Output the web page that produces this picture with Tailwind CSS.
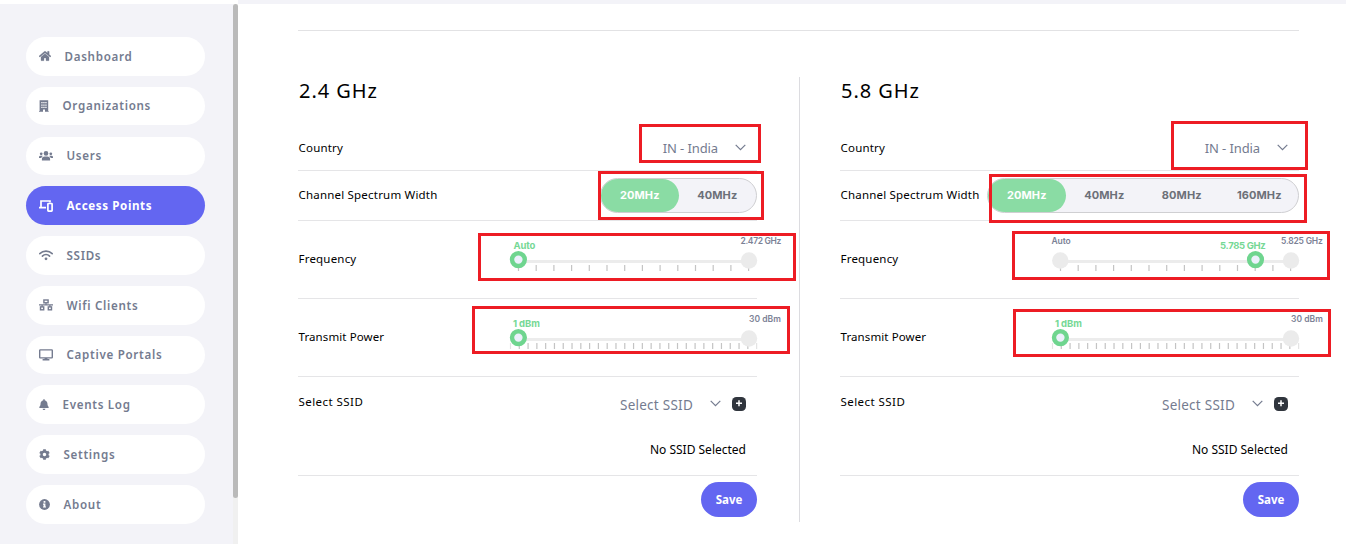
<!DOCTYPE html>
<html lang="en">
<head>
<meta charset="utf-8">
<title>Access Points</title>
<script src="https://cdn.jsdelivr.net/npm/@tailwindcss/browser@4"></script>
</head>
<body class="relative flex h-[544px] overflow-hidden bg-white font-['Noto_Sans',sans-serif] text-black">

<aside class="mt-1 flex w-[238px] shrink-0 justify-between bg-[#f3f3f8]">
  <nav id="nav" class="ml-[26px] mt-[33px] flex w-[179px] flex-col gap-[11.2px]"></nav>
  <div class="w-[5px] bg-[#f0f0f0]"><div class="h-[494px] rounded-full bg-[#bababa]"></div></div>
</aside>

<main class="flex-1 border-t-4 border-[#f3f3f8] pl-[60px] pt-[26px]">
  <hr class="w-[1001px] border-t border-[#e2e2e4]">
  <div class="flex pt-[40px]">
    <section id="band24" class="w-[459px]"></section>
    <div class="ml-[42px] mr-[40px] mt-[6px] h-[445px] w-px bg-[#dcdce0]"></div>
    <section id="band58" class="w-[459px]"></section>
  </div>
</main>

<!-- highlight frames -->
<div class="absolute left-[639px] top-[124px] h-[39px] w-[122px] border-3 border-[#ed1c24]"></div>
<div class="absolute left-[598px] top-[171px] h-[49px] w-[166px] border-3 border-[#ed1c24]"></div>
<div class="absolute left-[478px] top-[233px] h-[48px] w-[318px] border-3 border-[#ed1c24]"></div>
<div class="absolute left-[472px] top-[306px] h-[48px] w-[318px] border-3 border-[#ed1c24]"></div>
<div class="absolute left-[1171px] top-[121px] h-[49px] w-[137px] border-3 border-[#ed1c24]"></div>
<div class="absolute left-[989px] top-[174px] h-[49px] w-[318px] border-3 border-[#ed1c24]"></div>
<div class="absolute left-[1012px] top-[231px] h-[49px] w-[318px] border-3 border-[#ed1c24]"></div>
<div class="absolute left-[1013px] top-[309px] h-[48px] w-[318px] border-3 border-[#ed1c24]"></div>

<script>
const icons = {
  home: [12, 12, '0 0 576 512', '<path fill="currentColor" stroke="currentColor" stroke-width="14" d="M280.37 148.26L96 300.11V464a16 16 0 0 0 16 16l112.06-.29a16 16 0 0 0 15.92-16V368a16 16 0 0 1 16-16h64a16 16 0 0 1 16 16v95.64a16 16 0 0 0 16 16.05L464 480a16 16 0 0 0 16-16V300L295.67 148.26a12.19 12.19 0 0 0-15.3 0zM571.6 251.47L488 182.56V44.05a12 12 0 0 0-12-12h-56a12 12 0 0 0-12 12v72.61L318.47 43a48 48 0 0 0-61 0L4.34 251.47a12 12 0 0 0-1.6 16.9l25.5 31A12 12 0 0 0 45.15 301l235.22-193.74a12.19 12.19 0 0 1 15.3 0L530.9 301a12 12 0 0 0 16.9-1.6l25.5-31a12 12 0 0 0-1.7-16.93z"/>'],
  building: [10, 12, '0 0 10 12', '<path fill="currentColor" fill-rule="evenodd" d="M.6.3h8.6v10.8h.5v.7H6V9.6H4v2.2H0v-.7h.6zM2.3 2v1.3h1.3V2zm2 0v1.3h1.3V2zm2 0v1.3h1.3V2zm-4 2.4v1.3h1.3V4.4zm2 0v1.3h1.3V4.4zm2 0v1.3h1.3V4.4zm-4 2.4v1.3h1.3V6.8zm2 0v1.3h1.3V6.8zm2 0v1.3h1.3V6.8z"/>'],
  users: [14, 12, '0 0 14 12', '<g fill="currentColor"><circle cx="7" cy="3.4" r="2.3"/><circle cx="2.2" cy="3.8" r="1.35"/><circle cx="11.8" cy="3.8" r="1.35"/><path d="M2.9 10.6V9.4A2.8 2.8 0 0 1 5.7 6.6h2.6a2.8 2.8 0 0 1 2.8 2.8v1.2zM0 8.1V7.2A1.4 1.4 0 0 1 1.4 5.8h1.8l.7.3A3.6 3.6 0 0 0 2.3 8.1zM14 8.1V7.2a1.4 1.4 0 0 0-1.4-1.4h-1.8l-.7.3a3.6 3.6 0 0 1 1.6 2z"/></g>'],
  devices: [14, 12, '0 0 14 12', '<g fill="none" stroke="currentColor" stroke-width="1.7"><path d="M2 7.4V1h9v1.6M0 7.7h7"/><rect x="8.9" y="3.5" width="4.2" height="7.6" rx=".6"/></g>'],
  wifi: [14, 12, '0 0 14 12', '<g fill="none" stroke="currentColor" stroke-width="1.6" stroke-linecap="round"><path d="M.8 4.6a9 9 0 0 1 12.4 0M3.4 7.1a5.2 5.2 0 0 1 7.2 0"/></g><circle cx="7" cy="9.8" r="1.4" fill="currentColor"/>'],
  network: [14, 12, '0 0 14 12', '<g fill="none" stroke="currentColor" stroke-width="1.4"><rect x="4.9" y="1" width="4.2" height="2.8"/><rect x="1.5" y="7.9" width="3.2" height="2.9"/><rect x="9.3" y="7.9" width="3.2" height="2.9"/><path d="M0 5.9h14M7 3.8v2.1M3.1 5.9v2M10.9 5.9v2" stroke-width="1.1"/></g>'],
  monitor: [14, 12, '0 0 14 12', '<rect x=".7" y=".9" width="12.6" height="8" rx=".6" fill="none" stroke="currentColor" stroke-width="1.4"/><path d="M5.6 9h2.8v1h2v1.5H3.6V10h2z" fill="currentColor"/>'],
  bell: [10, 11, '0 0 448 512', '<path fill="currentColor" d="M224 512c35.32 0 63.97-28.65 63.97-64H160.03c0 35.35 28.65 64 63.97 64zm215.39-149.71c-19.32-20.76-55.47-51.99-55.47-154.29 0-77.7-54.48-139.9-127.94-155.16V32c0-17.67-14.32-32-31.98-32s-31.98 14.33-31.98 32v20.84C118.56 68.1 64.08 130.3 64.08 208c0 102.3-36.15 133.53-55.47 154.29-6 6.45-8.66 14.16-8.61 21.71.11 16.4 12.98 32 32.1 32h383.8c19.12 0 32-15.6 32.1-32 .05-7.55-2.61-15.27-8.61-21.71z"/>'],
  cog: [11, 11, '0 0 512 512', '<path fill="currentColor" d="M487.4 315.7l-42.6-24.6c4.3-23.2 4.3-47 0-70.2l42.6-24.6c4.9-2.8 7.1-8.6 5.5-14-11.1-35.6-30-67.8-54.7-94.6-3.8-4.1-10-5.1-14.8-2.3L380.8 110c-17.9-15.4-38.5-27.3-60.8-35.1V25.8c0-5.6-3.9-10.5-9.4-11.7-36.7-8.2-74.3-7.8-109.2 0-5.5 1.2-9.4 6.1-9.4 11.7V75c-22.2 7.9-42.8 19.8-60.8 35.1L88.7 85.5c-4.9-2.8-11-1.9-14.8 2.3-24.7 26.7-43.6 58.9-54.7 94.6-1.7 5.4.6 11.2 5.5 14L67.3 221c-4.3 23.2-4.3 47 0 70.2l-42.6 24.6c-4.9 2.8-7.1 8.6-5.5 14 11.1 35.6 30 67.8 54.7 94.6 3.8 4.1 10 5.1 14.8 2.3l42.6-24.6c17.9 15.4 38.5 27.3 60.8 35.1v49.2c0 5.6 3.9 10.5 9.4 11.7 36.7 8.2 74.3 7.8 109.2 0 5.5-1.2 9.4-6.1 9.4-11.7v-49.2c22.2-7.9 42.8-19.8 60.8-35.1l42.6 24.6c4.9 2.8 11 1.9 14.8-2.3 24.7-26.7 43.6-58.9 54.7-94.6 1.5-5.5-.7-11.3-5.6-14.1zM256 336c-44.1 0-80-35.9-80-80s35.9-80 80-80 80 35.9 80 80-35.9 80-80 80z"/>'],
  info: [11, 11, '0 0 11 11', '<circle cx="5.5" cy="5.5" r="5.4" fill="currentColor"/><path d="M4.6 2.1h1.8v1.6H4.6zM4 4.6h2.4v2.8H7v1.2H4V7.4h.6V5.8H4z" fill="white"/>'],
};
const nav = [['home', 'Dashboard'], ['building', 'Organizations'], ['users', 'Users'], ['devices', 'Access Points', true], ['wifi', 'SSIDs'], ['network', 'Wifi Clients'], ['monitor', 'Captive Portals'], ['bell', 'Events Log'], ['cog', 'Settings'], ['info', 'About']];
document.getElementById('nav').innerHTML = nav.map(([key, label, active]) => {
  const [w, h, box, body] = icons[key];
  return `<a class="flex h-[38.6px] shrink-0 items-center gap-[13.5px] rounded-full pl-[13px] text-[11.6px] ${active ? 'bg-[#6366f1] font-bold tracking-[0.6px] text-white' : 'bg-white font-semibold tracking-[0.7px] text-[#747b8f]'}"><svg width="${w}" height="${h}" viewBox="${box}">${body}</svg><span>${label}</span></a>`;
}).join('');

function slider({ ticks, dense, value, at, vx, vw, right, rx, rw, left }) {
  let s = '<path d="M6 40.5H243" stroke="#ececec" stroke-width="3"/>';
  for (let i = 0; i < ticks; i++) {
    const x = dense ? .5 + i * 8.79 : 8.5 + i * 17.7;
    const edge = dense && (i === 0 || i === ticks - 1);
    s += `<path d="M${x.toFixed(2)} 44v6" stroke="${edge ? '#e4e4e4' : '#c4c4c4'}" stroke-width="1.2"/>`;
  }
  if (left) s += `<circle cx="8.3" cy="39.5" r="8.2" fill="#ebebeb"/><text x="-.5" y="23" textLength="19.5" font-size="8.5" font-weight="600" fill="#7c8296">${left}</text>`;
  s += `<circle cx="239" cy="39.5" r="8.2" fill="#ebebeb"/>
    <circle cx="${at}" cy="38.6" r="6.4" fill="#ecf0fc" stroke="#6fd58f" stroke-width="4.4"/>
    <text x="${vx}" y="28" textLength="${vw}" font-size="9.5" font-weight="700" fill="#76d895">${value}</text>
    <text x="${rx}" y="23" textLength="${rw}" font-size="8.5" font-weight="600" fill="#7c8296">${right}</text>`;
  return `<svg class="overflow-visible font-['Inter',sans-serif]" width="247" height="77">${s}</svg>`;
}
const chevron = '<svg width="11" height="7" viewBox="0 0 11 7" fill="none" stroke="#747b8f" stroke-width="1.2"><path d="M.7.9L5.5 5.7L10.3.9"/></svg>';

function band(title, widths, freq) {
  return `
  <h2 class="h-[54px] pl-px pt-[5px] text-[20px] leading-[30px] tracking-[0.95px]">${title}</h2>
  <div class="text-[11.5px] tracking-[0.2px]">
    <div class="flex h-[46px] items-center justify-between border-b border-[#e5e5e7] pl-[0.5px]"><span>Country</span>
      <div class="flex items-center gap-[17px] pr-[11px] text-[13px] tracking-[-0.1px] text-[#747b8f]"><span class="pt-[2px]">IN - India</span>${chevron}</div></div>
    <div class="flex h-[50px] items-center justify-between border-b border-[#e5e5e7] pl-[0.5px]"><span class="whitespace-nowrap pb-[2px]">Channel Spectrum Width</span>
      <div class="flex h-[35px] shrink-0 rounded-full border border-[#cfcfd2] bg-[#f3f3f8] font-['Inter',sans-serif] text-[11px] font-bold tracking-[0.1px] text-[#6c7079]">
        ${widths.map((w, i) => `<span class="flex w-[77.5px] items-center justify-center rounded-full ${i ? '' : 'bg-[#8adca4] text-white'}">${w}</span>`).join('')}
      </div></div>
    <div class="flex h-[78px] items-center justify-between border-b border-[#e5e5e7] pl-[0.5px]"><span class="pb-[2px]">Frequency</span>${slider(freq)}</div>
    <div class="flex h-[78px] items-center justify-between border-b border-[#e5e5e7] pl-[0.5px]"><span class="pb-[2px] tracking-[0.1px]">Transmit Power</span>${slider({ ticks: 29, dense: true, value: '1 dBm', at: 8.4, vx: 3, vw: 27, right: '30 dBm', rx: 239, rw: 32 })}</div>
    <div class="h-[99px] border-b border-[#e5e5e7] pl-[0.5px] pr-[11px]">
      <div class="flex h-[54px] items-center justify-between"><span class="pb-[4px] tracking-[0.45px]">Select SSID</span>
        <div class="flex items-center text-[13.5px] tracking-[0.25px] text-[#747b8f]"><span class="mr-[17px] pt-[2px]">Select SSID</span><span class="pb-px">${chevron}</span>
          <svg class="ml-[11px]" width="14" height="14" viewBox="0 0 14 14"><rect width="14" height="14" rx="4.5" fill="#30353d"/><path d="M7 3.2v6M4 6.2h6" stroke="white" stroke-width="1.5"/></svg></div></div>
      <div class="flex h-[38px] items-center justify-end text-[12px] tracking-normal">No SSID Selected</div>
    </div>
    <div class="flex justify-end pt-[6px]"><button class="h-[35px] w-[56px] rounded-full bg-[#6366f1] text-[11.5px] font-bold tracking-normal text-white">Save</button></div>
  </div>`;
}
document.getElementById('band24').innerHTML = band('2.4 GHz', ['20MHz', '40MHz'], { ticks: 14, value: 'Auto', at: 8.4, vx: 3.5, vw: 22, right: '2.472 GHz', rx: 230.5, rw: 41 });
document.getElementById('band58').innerHTML = band('5.8 GHz', ['20MHz', '40MHz', '80MHz', '160MHz'], { ticks: 14, left: 'Auto', value: '5.785 GHz', at: 203.5, vx: 168, vw: 46, right: '5.825 GHz', rx: 229, rw: 42 });
</script>
</body>
</html>
